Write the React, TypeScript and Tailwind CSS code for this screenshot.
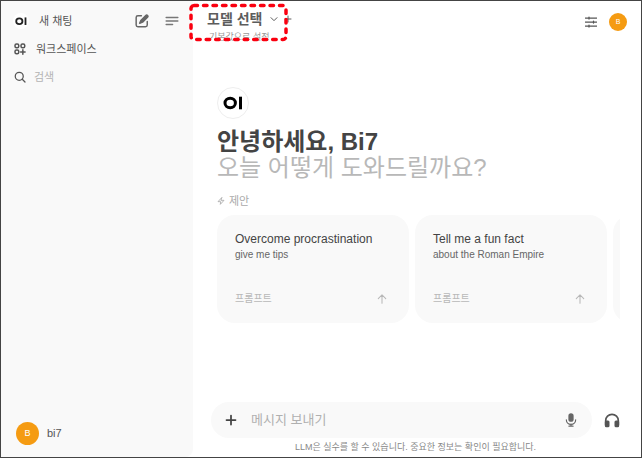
import type { ReactNode } from "react";

function Logo({ className }: { className: string }) {
  return (
    <svg viewBox="0 0 20 14" className={className} fill="none" aria-hidden="true">
      <ellipse cx="7.200" cy="7" rx="5.200" ry="4.800" stroke="currentColor" strokeWidth="3" />
      <rect x="16" y="0.7" width="3" height="12.600" fill="currentColor" />
    </svg>
  );
}

function Icon({
  className,
  strokeWidth = 2,
  children,
}: {
  className: string;
  strokeWidth?: number;
  children: ReactNode;
}) {
  return (
    <svg
      viewBox="0 0 24 24"
      className={className}
      fill="none"
      stroke="currentColor"
      strokeWidth={strokeWidth}
      strokeLinecap="round"
      strokeLinejoin="round"
      aria-hidden="true"
    >
      {children}
    </svg>
  );
}

function Sidebar() {
  return (
    <aside className="flex w-48 shrink-0 flex-col rounded-br-lg bg-[#f9f9f9] pt-1.5 pb-3 text-[11px] text-[#555]">
      <div className="flex h-7 items-center pr-3.5 pl-3">
        <a href="#new" className="flex flex-1 items-center gap-2.5">
          <span className="flex size-4 items-center justify-center rounded-full bg-white text-[#222]">
            <Logo className="w-3" />
          </span>
          새 채팅
        </a>
        <button aria-label="새 채팅" className="mr-4 text-[#666]">
          <Icon className="size-3.5" strokeWidth={2.5}>
            <path d="M11 3H5a3 3 0 0 0-3 3v13a3 3 0 0 0 3 3h13a3 3 0 0 0 3-3v-6" />
            <path d="M18.5 2.5a2 2 0 0 1 3 3L13 14l-5 2 2-5z" fill="currentColor" />
          </Icon>
        </button>
        <button aria-label="사이드바" className="text-[#777]">
          <Icon className="size-3.5" strokeWidth={2.5}>
            <path d="M2 6h20M2 12h20M2 18h11" />
          </Icon>
        </button>
      </div>
      <a href="#workspace" className="flex h-7 items-center gap-2.5 pl-[13px]">
        <Icon className="size-3" strokeWidth={3}>
          <rect x="2" y="2" width="7.5" height="7.5" rx="3" />
          <rect x="14" y="2" width="7.5" height="7.5" rx="3" />
          <rect x="2" y="14" width="7.5" height="7.5" rx="3" />
          <path d="M17.700 13.500v9M13.200 18h9" />
        </Icon>
        워크스페이스
      </a>
      <label className="flex h-7 items-center gap-2 pl-[13px]">
        <Icon className="size-3" strokeWidth={2.5}>
          <circle cx="10.500" cy="10.500" r="8" />
          <path d="m16.500 16.500 5.500 5.500" />
        </Icon>
        <input
          type="text"
          aria-label="검색"
          placeholder="검색"
          className="w-32 bg-transparent outline-none placeholder:text-[#b4b4b4]"
        />
      </label>
      <button className="mt-auto flex items-center gap-2 pl-[15px]">
        <span className="flex size-[23px] items-center justify-center rounded-full bg-[#f59b12] text-[9px] text-white">
          B
        </span>
        bi7
      </button>
    </aside>
  );
}

function Header() {
  return (
    <header className="flex items-start justify-between pt-2 pr-3.5 pl-3.5">
      <div className="relative">
        <div className="flex items-center text-[#5c5c5c]">
          <button className="flex items-center gap-2 text-sm leading-5 font-bold">
            모델 선택
            <Icon className="size-2" strokeWidth={3}>
              <path d="m3 8 9 9 9-9" />
            </Icon>
          </button>
          <button aria-label="모델 추가" className="ml-1.5">
            <Icon className="size-2" strokeWidth={3}>
              <path d="M12 3v18M3 12h18" />
            </Icon>
          </button>
        </div>
        <button className="block pl-0.5 text-[9px] leading-4 text-[#999]">기본값으로 설정</button>
        <svg
          className="pointer-events-none absolute -top-1.5 -left-4.5 h-10 w-25"
          viewBox="0 0 100 40"
          fill="none"
          aria-hidden="true"
        >
          <rect
            x="2"
            y="2.5"
            width="95"
            height="34"
            rx="3"
            stroke="#fa0010"
            strokeWidth="3.500"
            strokeDasharray="3.500 6"
            strokeLinecap="round"
          />
        </svg>
      </div>
      <div className="flex items-center gap-3 pt-1">
        <button aria-label="설정" className="text-[#555]">
          <Icon className="size-3" strokeWidth={2.5}>
            <path d="M1 4h22M1 12h22M1 20h22M8 2v4M17 10v4M8 18v4" />
          </Icon>
        </button>
        <button className="flex size-[18px] items-center justify-center rounded-full bg-[#f59b12] text-[7px] text-white">
          B
        </button>
      </div>
    </header>
  );
}

function PromptCard({ title, detail }: { title: string; detail: string }) {
  return (
    <button className="flex h-27 w-48 shrink-0 flex-col rounded-[18px] bg-[#f9f9f9] px-[18px] py-4 text-left">
      <span className="text-xs leading-4 text-[#444]">{title}</span>
      <span className="text-[10px] leading-4 text-[#666]">{detail}</span>
      <span className="mt-auto flex w-full items-center justify-between text-[10px] leading-4 text-[#b8b8b8]">
        프롬프트
        <Icon className="mr-1 size-2.5" strokeWidth={2.5}>
          <path d="M12 22V3M3 11l9-9 9 9" />
        </Icon>
      </span>
    </button>
  );
}

function Composer() {
  return (
    <footer className="mt-auto pr-[21px] pl-[18px]">
      <form className="flex items-center gap-3">
        <div className="flex h-9 min-w-0 flex-1 items-center rounded-full bg-[#f9f9f9] px-3.5">
          <button type="button" aria-label="첨부" className="text-[#444]">
            <Icon className="size-3" strokeWidth={3.5}>
              <path d="M12 3v18M3 12h18" />
            </Icon>
          </button>
          <input
            type="text"
            aria-label="메시지 보내기"
            placeholder="메시지 보내기"
            className="ml-3.5 min-w-0 flex-1 bg-transparent text-[13px] outline-none placeholder:text-[#b0b0b0]"
          />
          <button type="button" aria-label="음성 입력" className="text-[#666]">
            <Icon className="size-3.5" strokeWidth={2}>
              <rect x="7.500" y="0.5" width="9" height="14.500" rx="4.500" fill="currentColor" stroke="none" />
              <path d="M4 11.500a8 8 0 0 0 16 0M12 19v3M8.500 22.500h7" />
            </Icon>
          </button>
        </div>
        <button type="button" aria-label="통화" className="text-[#555]">
          <Icon className="size-4" strokeWidth={2.500}>
            <path d="M2.500 19v-6a9.500 9.500 0 0 1 19 0v6" />
            <rect x="2.500" y="14" width="4.500" height="7.500" rx="1" fill="currentColor" />
            <rect x="17" y="14" width="4.500" height="7.500" rx="1" fill="currentColor" />
          </Icon>
        </button>
      </form>
      <p className="text-center text-[9px] leading-[19px] text-[#888]">
        LLM은 실수를 할 수 있습니다. 중요한 정보는 확인이 필요합니다.
      </p>
    </footer>
  );
}

export default function App() {
  return (
    <div className="flex h-screen overflow-hidden border border-[#444] bg-white font-['Liberation_Sans','Noto_Sans_CJK_KR',sans-serif]">
      <Sidebar />
      <main className="flex min-w-0 flex-1 flex-col">
        <Header />
        <section className="mt-[42px] pr-[21px] pl-6">
          <div className="flex size-8 items-center justify-center rounded-full border border-[#eee] text-black">
            <Logo className="w-5" />
          </div>
          <h1 className="mt-2.5 text-2xl leading-[26px] font-bold text-[#444]">
            안녕하세요, Bi7
            <span className="block font-normal text-[#b8b8b8]">오늘 어떻게 도와드릴까요?</span>
          </h1>
          <h2 className="mt-3 flex items-center gap-1 text-[11px] leading-4 text-[#aaa]">
            <Icon className="size-2" strokeWidth={2.5}>
              <path d="M14 2 3 14h8l-1 8 11-12h-8z" />
            </Icon>
            제안
          </h2>
          <div className="mt-1.5 flex gap-1.5 overflow-hidden">
            <PromptCard title="Overcome procrastination" detail="give me tips" />
            <PromptCard title="Tell me a fun fact" detail="about the Roman Empire" />
            <div className="h-27 w-48 shrink-0 rounded-[18px] bg-[#f9f9f9]" />
          </div>
        </section>
        <Composer />
      </main>
    </div>
  );
}
